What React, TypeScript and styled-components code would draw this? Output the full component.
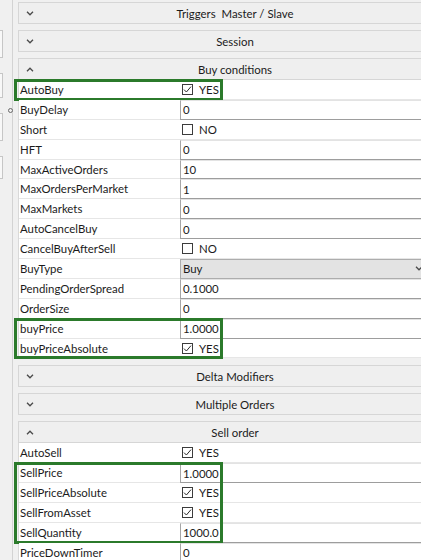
import React from "react";
import styled, { createGlobalStyle } from "styled-components";

const GlobalStyle = createGlobalStyle`
  html, body {
    margin: 0;
    padding: 0;
    background: #f0f0f0;
    overflow: hidden;
  }
  body {
    font-family: Lato, "Noto Sans", sans-serif;
    font-size: 11.4px;
    color: #1b1b1b;
  }
`;

const Page = styled.div`
  display: flex;
  width: 421px;
  height: 560px;
  overflow: hidden;
`;

const Strip = styled.div`
  position: relative;
  flex: 0 0 13px;
  box-sizing: border-box;
  border-right: 1px solid #d3d3d3;
  padding-top: 30px;
  display: flex;
  flex-direction: column;
  gap: 15px;
`;

const StripButton = styled.div<{ $h: number }>`
  width: 3px;
  height: ${(p) => p.$h}px;
  box-sizing: border-box;
  background: #f8f8f8;
  border: 1px solid #c6c6c6;
  border-left: none;
`;

const Dot = styled.span`
  position: absolute;
  left: 8px;
  top: 108px;
  width: 5px;
  height: 5px;
  border-radius: 50%;
  border: 1px solid #6a6a6a;
  box-sizing: border-box;
`;

const Main = styled.div`
  flex: 0 0 434px;
  padding: 2px 0 0 5px;
  display: flex;
  flex-direction: column;
  gap: 6px;
`;

const Section = styled.section`
  display: flex;
  flex-direction: column;
`;

const Header = styled.div`
  height: 22px;
  box-sizing: border-box;
  border: 1px solid #d6d6d6;
  background: #efefef;
  display: flex;
  align-items: center;
`;

const Chevron = styled.span`
  flex: 0 0 24px;
  padding-left: 7px;
  box-sizing: border-box;
  display: flex;
  align-items: center;
`;

const HeaderTitle = styled.span`
  flex: 1;
  text-align: center;
  white-space: pre;
`;

const Spacer = styled.span`
  flex: 0 0 24px;
`;

const Table = styled.div`
  border-left: 1px solid #d9d9d9;
  margin-bottom: 1px;
  display: flex;
  flex-direction: column;
`;

const Group = styled.div<{ $marked: boolean }>`
  position: relative;
  display: flex;
  flex-direction: column;
  &::after {
    content: "";
    display: ${(p) => (p.$marked ? "block" : "none")};
    position: absolute;
    left: -5px;
    top: -1px;
    bottom: -1px;
    width: 209px;
    box-sizing: border-box;
    border: 3px solid #2b7a2b;
    pointer-events: none;
  }
`;

const Row = styled.div`
  display: grid;
  grid-template-columns: 161px 1fr;
  height: 19.9px;
`;

const Label = styled.div`
  background: #fff;
  border-bottom: 1px solid #e6e6e6;
  padding-left: 1px;
  display: flex;
  align-items: center;
  white-space: nowrap;
`;

const TextField = styled.div`
  background: #fff;
  box-sizing: border-box;
  border-style: solid;
  border-width: 1px;
  border-color: #e3e3e3 #e3e3e3 #9d9d9d #a6a6a6;
  padding-left: 2px;
  display: flex;
  align-items: center;
`;

const CheckField = styled.div`
  background: #fff;
  border-bottom: 1px solid #e6e6e6;
  padding-left: 2px;
  display: flex;
  align-items: center;
  gap: 6px;
`;

const Box = styled.span`
  width: 11px;
  height: 11px;
  box-sizing: border-box;
  border: 1px solid #3c3c3c;
  background: #fff;
  display: flex;
  align-items: center;
  justify-content: center;
`;

const Combo = styled.div`
  width: 248px;
  box-sizing: border-box;
  background: #e3e3e3;
  border: 1px solid #adadad;
  padding: 0 4px 0 2px;
  display: flex;
  align-items: center;
  justify-content: space-between;
`;

type Value =
  | { kind: "text"; v: string }
  | { kind: "check"; on: boolean }
  | { kind: "combo"; v: string };

type Item = [string, Value];

const t = (v: string): Value => ({ kind: "text", v });
const c = (on: boolean): Value => ({ kind: "check", on });

const buyGroups: { marked: boolean; rows: Item[] }[] = [
  { marked: true, rows: [["AutoBuy", c(true)]] },
  {
    marked: false,
    rows: [
      ["BuyDelay", t("0")],
      ["Short", c(false)],
      ["HFT", t("0")],
      ["MaxActiveOrders", t("10")],
      ["MaxOrdersPerMarket", t("1")],
      ["MaxMarkets", t("0")],
      ["AutoCancelBuy", t("0")],
      ["CancelBuyAfterSell", c(false)],
      ["BuyType", { kind: "combo", v: "Buy" }],
      ["PendingOrderSpread", t("0.1000")],
      ["OrderSize", t("0")],
    ],
  },
  {
    marked: true,
    rows: [
      ["buyPrice", t("1.0000")],
      ["buyPriceAbsolute", c(true)],
    ],
  },
];

const sellGroups: { marked: boolean; rows: Item[] }[] = [
  { marked: false, rows: [["AutoSell", c(true)]] },
  {
    marked: true,
    rows: [
      ["SellPrice", t("1.0000")],
      ["SellPriceAbsolute", c(true)],
      ["SellFromAsset", c(true)],
      ["SellQuantity", t("1000.0")],
    ],
  },
  { marked: false, rows: [["PriceDownTimer", t("0")]] },
];

function Arrow({ up }: { up?: boolean }) {
  return (
    <svg width="8" height="5" viewBox="0 0 8 5">
      <path
        d={up ? "M1 4.2 L4 1.2 L7 4.2" : "M1 0.8 L4 3.8 L7 0.8"}
        fill="none"
        stroke="#4a4a4a"
        strokeWidth="1.3"
      />
    </svg>
  );
}

function Field({ value }: { value: Value }) {
  if (value.kind === "check") {
    return (
      <CheckField>
        <Box>
          {value.on && (
            <svg width="9" height="9" viewBox="0 0 9 9">
              <path d="M1 4.6 L3.4 7 L8 1.6" fill="none" stroke="#2b2b2b" strokeWidth="1" />
            </svg>
          )}
        </Box>
        {value.on ? "YES" : "NO"}
      </CheckField>
    );
  }
  if (value.kind === "combo") {
    return (
      <Combo>
        {value.v}
        <Arrow />
      </Combo>
    );
  }
  return <TextField>{value.v}</TextField>;
}

function Panel({
  title,
  groups,
}: {
  title: string;
  groups?: { marked: boolean; rows: Item[] }[];
}) {
  return (
    <Section>
      <Header>
        <Chevron>
          <Arrow up={!!groups} />
        </Chevron>
        <HeaderTitle>{title}</HeaderTitle>
        <Spacer />
      </Header>
      {groups && (
        <Table>
          {groups.map((g, i) => (
            <Group key={i} $marked={g.marked}>
              {g.rows.map(([name, value]) => (
                <Row key={name}>
                  <Label>{name}</Label>
                  <Field value={value} />
                </Row>
              ))}
            </Group>
          ))}
        </Table>
      )}
    </Section>
  );
}

export default function App() {
  return (
    <>
      <GlobalStyle />
      <Page>
        <Strip>
          <StripButton $h={28} />
          <StripButton $h={25} />
          <StripButton $h={28} />
          <StripButton $h={23} />
          <Dot />
        </Strip>
        <Main>
          <Panel title="Triggers  Master / Slave" />
          <Panel title="Session" />
          <Panel title="Buy conditions" groups={buyGroups} />
          <Panel title="Delta Modifiers" />
          <Panel title="Multiple Orders" />
          <Panel title="Sell order" groups={sellGroups} />
        </Main>
      </Page>
    </>
  );
}
